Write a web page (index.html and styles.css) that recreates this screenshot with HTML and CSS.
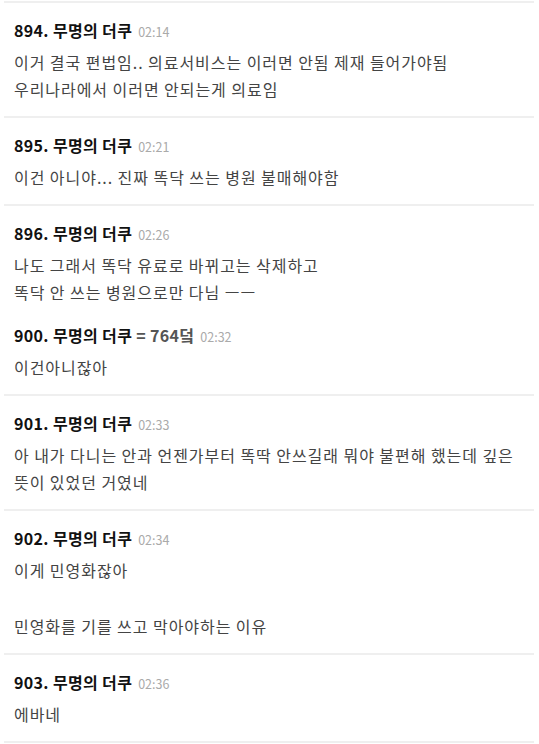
FILE: index.html
```html
<!DOCTYPE html>
<html>
<head>
    <meta charset="utf-8">
    <title>댓글</title>
    <link rel="stylesheet" href="styles.css">
</head>
<body>
    <ul class="reply-list">
        <li class="reply">
            <div class="reply-item">
                <div class="reply-head"><span class="nick">894. 무명의 더쿠</span> <span class="time">02:14</span></div>
                <div class="reply-body">이거 결국 편법임.. 의료서비스는 이러면 안됨 제재 들어가야됨<br>우리나라에서 이러면 안되는게 의료임</div>
            </div>
        </li>
        <li class="reply">
            <div class="reply-item">
                <div class="reply-head"><span class="nick">895. 무명의 더쿠</span> <span class="time">02:21</span></div>
                <div class="reply-body">이건 아니야... 진짜 똑닥 쓰는 병원 불매해야함</div>
            </div>
        </li>
        <li class="reply">
            <div class="reply-item">
                <div class="reply-head"><span class="nick">896. 무명의 더쿠</span> <span class="time">02:26</span></div>
                <div class="reply-body">나도 그래서 똑닥 유료로 바뀌고는 삭제하고<br>똑닥 안 쓰는 병원으로만 다님 ㅡㅡ</div>
            </div>
            <div class="reply-item sub">
                <div class="reply-head"><span class="nick">900. 무명의 더쿠</span> <span class="target">= 764덬</span> <span class="time">02:32</span></div>
                <div class="reply-body">이건아니잖아</div>
            </div>
        </li>
        <li class="reply">
            <div class="reply-item">
                <div class="reply-head"><span class="nick">901. 무명의 더쿠</span> <span class="time">02:33</span></div>
                <div class="reply-body">아 내가 다니는 안과 언젠가부터 똑딱 안쓰길래 뭐야 불편해 했는데 깊은 뜻이 있었던 거였네</div>
            </div>
        </li>
        <li class="reply">
            <div class="reply-item">
                <div class="reply-head"><span class="nick">902. 무명의 더쿠</span> <span class="time">02:34</span></div>
                <div class="reply-body">
                    <p>이게 민영화잖아</p>
                    <p class="para">민영화를 기를 쓰고 막아야하는 이유</p>
                </div>
            </div>
        </li>
        <li class="reply">
            <div class="reply-item">
                <div class="reply-head"><span class="nick">903. 무명의 더쿠</span> <span class="time">02:36</span></div>
                <div class="reply-body">에바네</div>
            </div>
        </li>
    </ul>
</body>
</html>
```
FILE: styles.css
```css
body {
    margin: 0;
    padding: 0;
    background: #ffffff;
    font-family: "Noto Sans CJK KR", "Noto Sans", sans-serif;
    color: #444;
}

.reply-list {
    list-style: none;
    margin: 0 5px 0 4px;
    padding: 1px 0 0;
}

.reply {
    border-top: 2px solid #efefef;
    padding: 16px 10px 13px;
}

.reply:last-child {
    border-bottom: 2px solid #efefef;
}

.reply-item.sub {
    margin-top: 18px;
}

.reply-head {
    font-size: 16px;
    line-height: 22px;
    letter-spacing: 0.35px;
    white-space: nowrap;
}

.reply-head .nick {
    font-weight: bold;
    color: #111;
}

.reply-head .target {
    font-weight: bold;
    color: #555;
}

.reply-head .time {
    font-size: 12.5px;
    letter-spacing: 0;
    color: #aaa;
    margin-left: 2px;
}

.reply-body {
    margin-top: 6px;
    font-size: 16px;
    line-height: 27px;
    letter-spacing: 0.95px;
    color: #444;
}

.reply-body p {
    margin: 0;
}

.reply-body .para {
    margin-top: 29px;
}
```
